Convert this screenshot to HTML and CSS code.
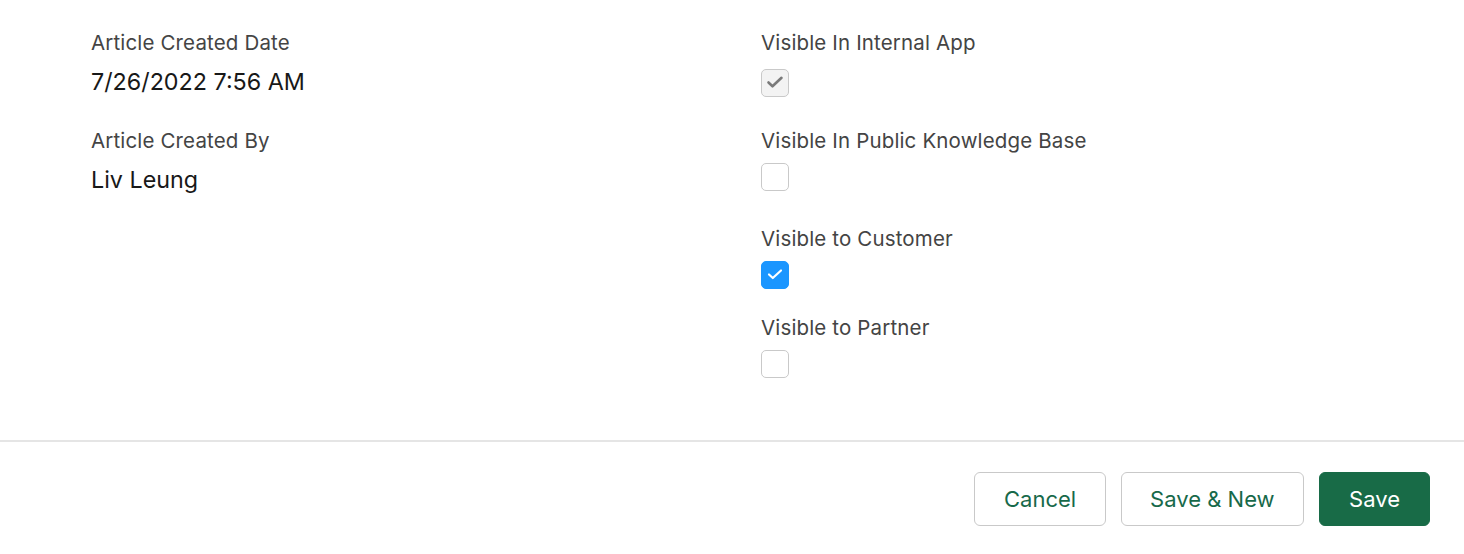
FILE: index.html
```html
<!DOCTYPE html>
<html lang="en">
<head>
<meta charset="utf-8">
<title>Article</title>
<link rel="stylesheet" href="styles.css">
</head>
<body>
<div class="modal">
  <div class="body">
    <div class="col">
      <div class="field">
        <div class="label">Article Created Date</div>
        <div class="value">7/26/2022 7:56 AM</div>
      </div>
      <div class="field">
        <div class="label">Article Created By</div>
        <div class="value">Liv Leung</div>
      </div>
    </div>
    <div class="col">
      <div class="cfield cfield-first">
        <div class="label">Visible In Internal App</div>
        <span class="cb cb-disabled">
          <svg width="28" height="28" viewBox="0 0 28 28"><polyline points="7.5,14.5 11.5,18.3 20.5,9.8" fill="none" stroke="#7a7a7a" stroke-width="2.6" stroke-linecap="round" stroke-linejoin="round"/></svg>
        </span>
      </div>
      <div class="cfield">
        <div class="label">Visible In Public Knowledge Base</div>
        <span class="cb"></span>
      </div>
      <div class="cfield cfield-tight">
        <div class="label">Visible to Customer</div>
        <span class="cb cb-checked">
          <svg width="28" height="28" viewBox="0 0 28 28"><polyline points="8,14.5 11.8,18 20,10.5" fill="none" stroke="#fff" stroke-width="2.2" stroke-linecap="round" stroke-linejoin="round"/></svg>
        </span>
      </div>
      <div class="cfield">
        <div class="label">Visible to Partner</div>
        <span class="cb"></span>
      </div>
    </div>
  </div>
  <div class="footer">
    <button class="btn">Cancel</button>
    <button class="btn">Save &amp; New</button>
    <button class="btn btn-brand">Save</button>
  </div>
</div>
</body>
</html>
```

FILE: styles.css
```css
* { box-sizing: border-box; }
html, body { margin: 0; padding: 0; background: #fff; }
body {
  font-family: Inter, "Noto Sans", "Liberation Sans", sans-serif;
  color: #181818;
  width: 1464px;
  height: 554px;
  overflow: hidden;
}
.body {
  height: 440px;
  padding: 29px 33px 0 91px;
  display: grid;
  grid-template-columns: 1fr 1fr;
}
.col { display: flex; flex-direction: column; }
.label {
  font-size: 20.5px;
  line-height: 28px;
  letter-spacing: 0.15px;
  color: #444;
}
.value {
  font-size: 23.3px;
  line-height: 32px;
  margin-top: 9px;
  color: #181818;
}
.field { height: 98px; }
.cfield { height: 98px; display: flex; flex-direction: column; align-items: flex-start; }
.cfield-tight { height: 89px; }
.cb {
  display: block;
  width: 28px;
  height: 28px;
  margin-top: 7.5px;
  border: 1.5px solid #c9c9c9;
  border-radius: 5px;
  background: #fff;
  position: relative;
}
.cfield-first .cb { margin-top: 11.5px; }
.cb svg { position: absolute; left: -1.5px; top: -1.5px; }
.cb-disabled { background: #f3f3f3; border-color: #c9c9c9; }
.cb-checked { background: #1b96ff; border-color: #1b96ff; }
.footer {
  border-top: 2.5px solid #e5e5e5;
  padding: 29.5px 34px 0 0;
  display: flex;
  justify-content: flex-end;
  gap: 15px;
}
.btn {
  font-family: inherit;
  font-size: 22px;
  height: 54px;
  padding: 0 28.5px;
  border: 1.5px solid #c9c9c9;
  border-radius: 6px;
  background: #fff;
  color: #17694a;
  cursor: pointer;
}
.btn-brand {
  background: #186b47;
  border-color: #186b47;
  color: #fff;
  padding: 0 29px;
}
```
